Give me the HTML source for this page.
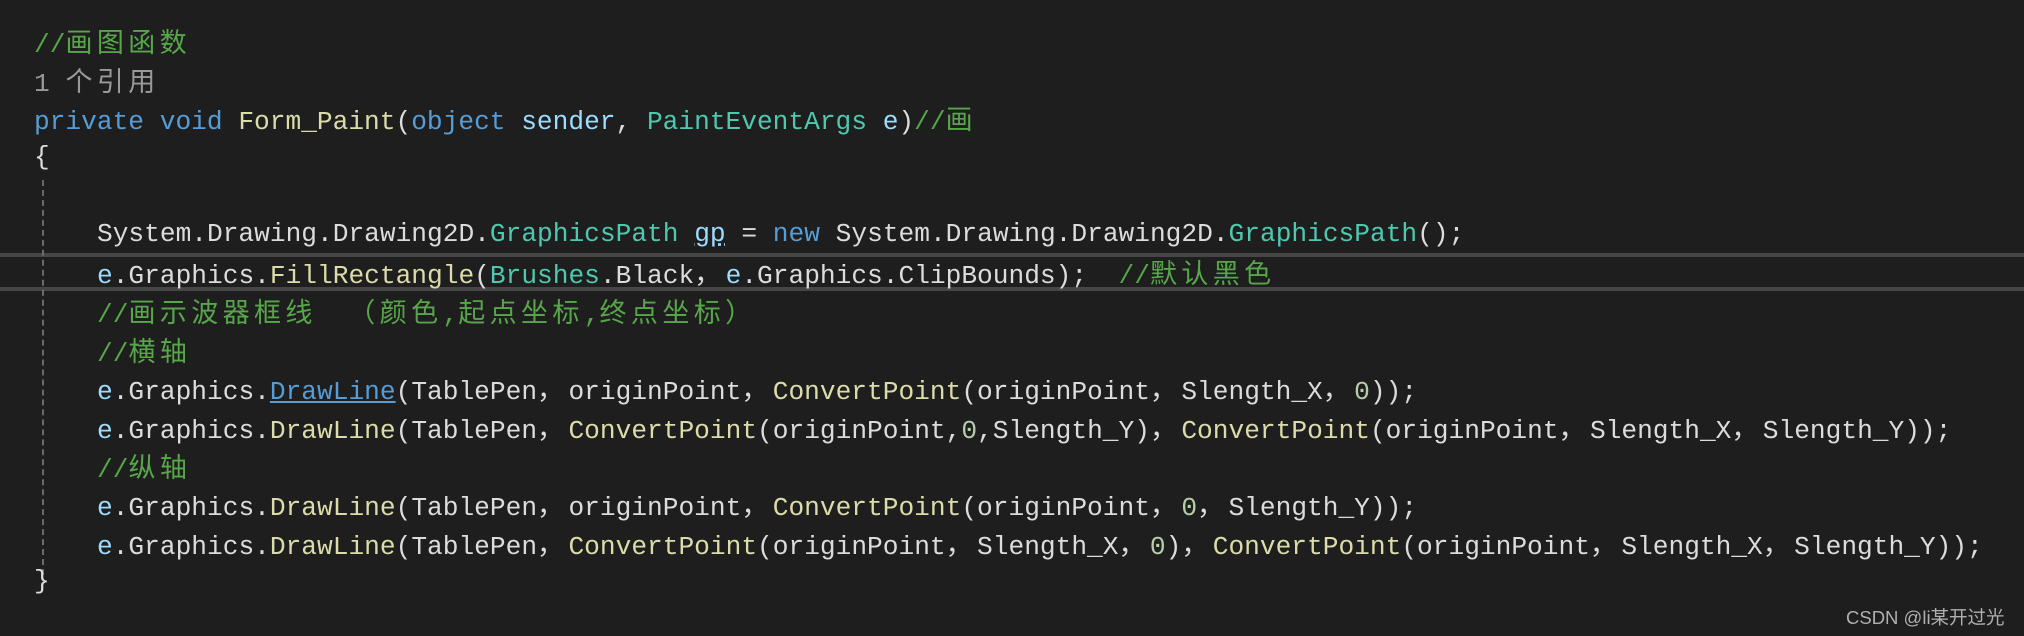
<!DOCTYPE html>
<html><head><meta charset="utf-8"><style>
html,body{margin:0;padding:0;background:#1e1e1e;width:2024px;height:636px;overflow:hidden;position:relative}
.l{position:absolute;white-space:pre;font-family:"Liberation Mono","Noto Sans CJK SC",monospace;font-size:26.2px;line-height:38px;height:38px;color:#dcdcdc}
.c{font-family:"Noto Sans CJK SC","WenQuanYi Zen Hei",sans-serif;font-size:27px;letter-spacing:4.4px}
.g{color:#57a64a}.k{color:#569cd6}.y{color:#dcdcaa}.t{color:#4ec9b0}.v{color:#9cdcfe}.n{color:#b5cea8}.gr{color:#999}
.hl{position:absolute;left:0;width:2024px;height:4px;background:#464646}
.guide{position:absolute;left:42px;top:180px;height:395px;width:0;border-left:2px dashed #6a6a6a}
.wm{position:absolute;left:1846px;top:604px;font-family:"Liberation Sans","Noto Sans CJK SC",sans-serif;font-size:18.5px;color:#b0b0b0}
</style></head><body>
<div class="hl" style="top:253px"></div>
<div class="hl" style="top:287px"></div>
<div class="guide"></div>
<div class="l g" style="left:34px;top:22px">//<span class="c">画图函数</span></div>
<div class="l gr" style="left:34px;top:61px">1 <span class="c">个引用</span></div>
<div class="l" style="left:34px;top:99px"><span class="k">private</span> <span class="k">void</span> <span class="y">Form_Paint</span>(<span class="k">object</span> <span class="v">sender</span>, <span class="t">PaintEventArgs</span> <span class="v">e</span>)<span class="g">//<span class="c">画</span></span></div>
<div class="l" style="left:34px;top:138px">{</div>
<div class="l" style="left:97px;top:215px">System.Drawing.Drawing2D.<span class="t">GraphicsPath</span> <span class="v" style="text-decoration:underline dotted #9cdcfe">gp</span> = <span class="k">new</span> System.Drawing.Drawing2D.<span class="t">GraphicsPath</span>();</div>
<div class="l" style="left:97px;top:253px"><span class="v">e</span>.Graphics.<span class="y">FillRectangle</span>(<span class="t">Brushes</span>.Black<span class="c">，</span><span class="v">e</span>.Graphics.ClipBounds);  <span class="g">//<span class="c">默认黑色</span></span></div>
<div class="l g" style="left:97px;top:292px">//<span class="c">画示波器框线</span>  <span class="c">（颜色</span>,<span class="c">起点坐标</span>,<span class="c">终点坐标）</span></div>
<div class="l g" style="left:97px;top:331px">//<span class="c">横轴</span></div>
<div class="l" style="left:97px;top:369px"><span class="v">e</span>.Graphics.<span style="color:#569cd6;text-decoration:underline">DrawLine</span>(TablePen<span class="c">，</span>originPoint<span class="c">，</span><span class="y">ConvertPoint</span>(originPoint<span class="c">，</span>Slength_X<span class="c">，</span><span class="n">0</span>));</div>
<div class="l" style="left:97px;top:408px"><span class="v">e</span>.Graphics.<span class="y">DrawLine</span>(TablePen<span class="c">，</span><span class="y">ConvertPoint</span>(originPoint,<span class="n">0</span>,Slength_Y)<span class="c">，</span><span class="y">ConvertPoint</span>(originPoint<span class="c">，</span>Slength_X<span class="c">，</span>Slength_Y));</div>
<div class="l g" style="left:97px;top:447px">//<span class="c">纵轴</span></div>
<div class="l" style="left:97px;top:485px"><span class="v">e</span>.Graphics.<span class="y">DrawLine</span>(TablePen<span class="c">，</span>originPoint<span class="c">，</span><span class="y">ConvertPoint</span>(originPoint<span class="c">，</span><span class="n">0</span><span class="c">，</span>Slength_Y));</div>
<div class="l" style="left:97px;top:524px"><span class="v">e</span>.Graphics.<span class="y">DrawLine</span>(TablePen<span class="c">，</span><span class="y">ConvertPoint</span>(originPoint<span class="c">，</span>Slength_X<span class="c">，</span><span class="n">0</span>)<span class="c">，</span><span class="y">ConvertPoint</span>(originPoint<span class="c">，</span>Slength_X<span class="c">，</span>Slength_Y));</div>
<div class="l" style="left:34px;top:562px">}</div>
<div class="wm">CSDN @li某开过光</div>
</body></html>
